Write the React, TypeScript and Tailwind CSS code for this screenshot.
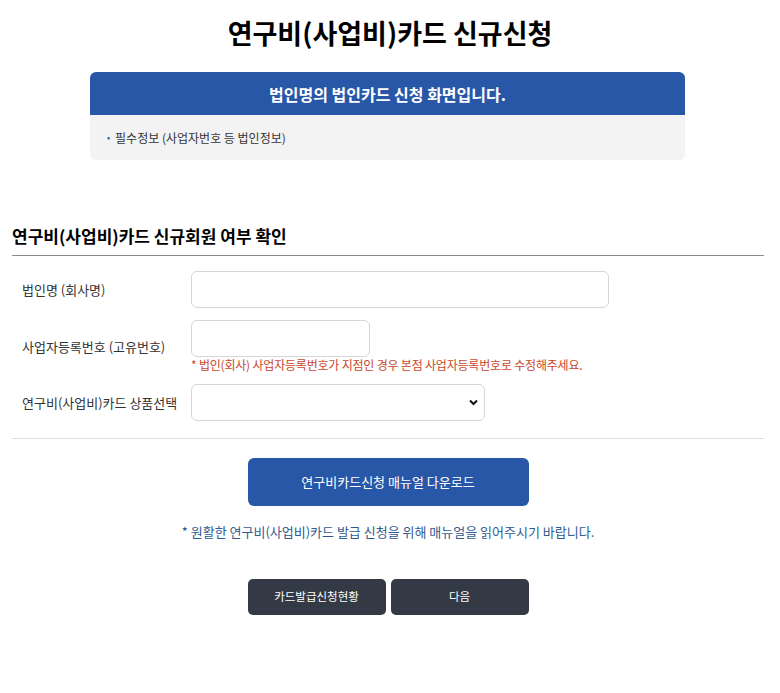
import React from "react";

export default function App() {
  return (
    <div
      className="w-[780px] h-[693px] bg-white text-[#222] overflow-hidden"
      style={{ fontFamily: '"Noto Sans CJK KR", "Noto Sans", sans-serif' }}
    >
      <h1 className="pt-[14px] text-center text-[27px] font-bold leading-[38px] text-black">
        연구비(사업비)카드 신규신청
      </h1>

      <div className="ml-[90px] mt-[20px] w-[595px] rounded-[6px] overflow-hidden bg-[#f3f3f3]">
        <div className="h-[43px] bg-[#2857a8] flex items-center justify-center text-white text-[16px] font-bold">
          법인명의 법인카드 신청 화면입니다.
        </div>
        <div className="h-[45px] flex items-center pl-[17px] text-[12px] text-[#333]">
          <span className="text-[#2857a8] mr-[5px] text-[9px]">•</span>
          필수정보 (사업자번호 등 법인정보)
        </div>
      </div>

      <div className="ml-[12px] w-[752px] mt-[64px]">
        <h2 className="text-[17px] font-bold text-black leading-[24px] pb-[7px] border-b border-[#8a8a8a]">
          연구비(사업비)카드 신규회원 여부 확인
        </h2>

        <div className="pt-[15px]">
          <div className="flex items-center">
            <div className="w-[179px] pl-[10px] text-[13px] text-[#333]">법인명 (회사명)</div>
            <input className="w-[418px] h-[37px] rounded-[6px] border border-[#d6d6d6] bg-white" />
          </div>

          <div className="flex items-center mt-[12px]">
            <div className="w-[179px] pl-[10px] text-[13px] text-[#333]">사업자등록번호 (고유번호)</div>
            <div className="flex flex-col">
              <input className="w-[179px] h-[37px] rounded-[6px] border border-[#d6d6d6] bg-white" />
              <div className="text-[12px] tracking-[-0.2px] text-[#c8482c] leading-[16px]">
                * 법인(회사) 사업자등록번호가 지점인 경우 본점 사업자등록번호로 수정해주세요.
              </div>
            </div>
          </div>

          <div className="flex items-center mt-[11px]">
            <div className="w-[179px] pl-[10px] text-[13px] text-[#333]">연구비(사업비)카드 상품선택</div>
            <div className="relative w-[294px] h-[37px] rounded-[6px] border border-[#d6d6d6] bg-white">
              <svg
                className="absolute right-[6px] top-[14px]"
                width="9"
                height="7"
                viewBox="0 0 9 7"
              >
                <path d="M1 1.5 L4.5 5 L8 1.5" stroke="#111" strokeWidth="2" fill="none" />
              </svg>
            </div>
          </div>
        </div>

        <div className="mt-[17px] border-b border-[#dedede]" />
      </div>

      <div className="w-[776px] flex flex-col items-center">
        <button className="mt-[19px] w-[281px] h-[48px] rounded-[6px] bg-[#2857a8] text-white text-[13px]">
          연구비카드신청 매뉴얼 다운로드
        </button>
        <div className="mt-[16px] text-[13px] text-[#2f5b8f]">
          * 원활한 연구비(사업비)카드 발급 신청을 위해 매뉴얼을 읽어주시기 바랍니다.
        </div>
        <div className="mt-[37px] flex gap-[5px]">
          <button className="w-[138px] h-[36px] rounded-[5px] bg-[#333a46] text-white text-[11.5px]">
            카드발급신청현황
          </button>
          <button className="w-[138px] h-[36px] rounded-[5px] bg-[#333a46] text-white text-[11.5px]">
            다음
          </button>
        </div>
      </div>
    </div>
  );
}
